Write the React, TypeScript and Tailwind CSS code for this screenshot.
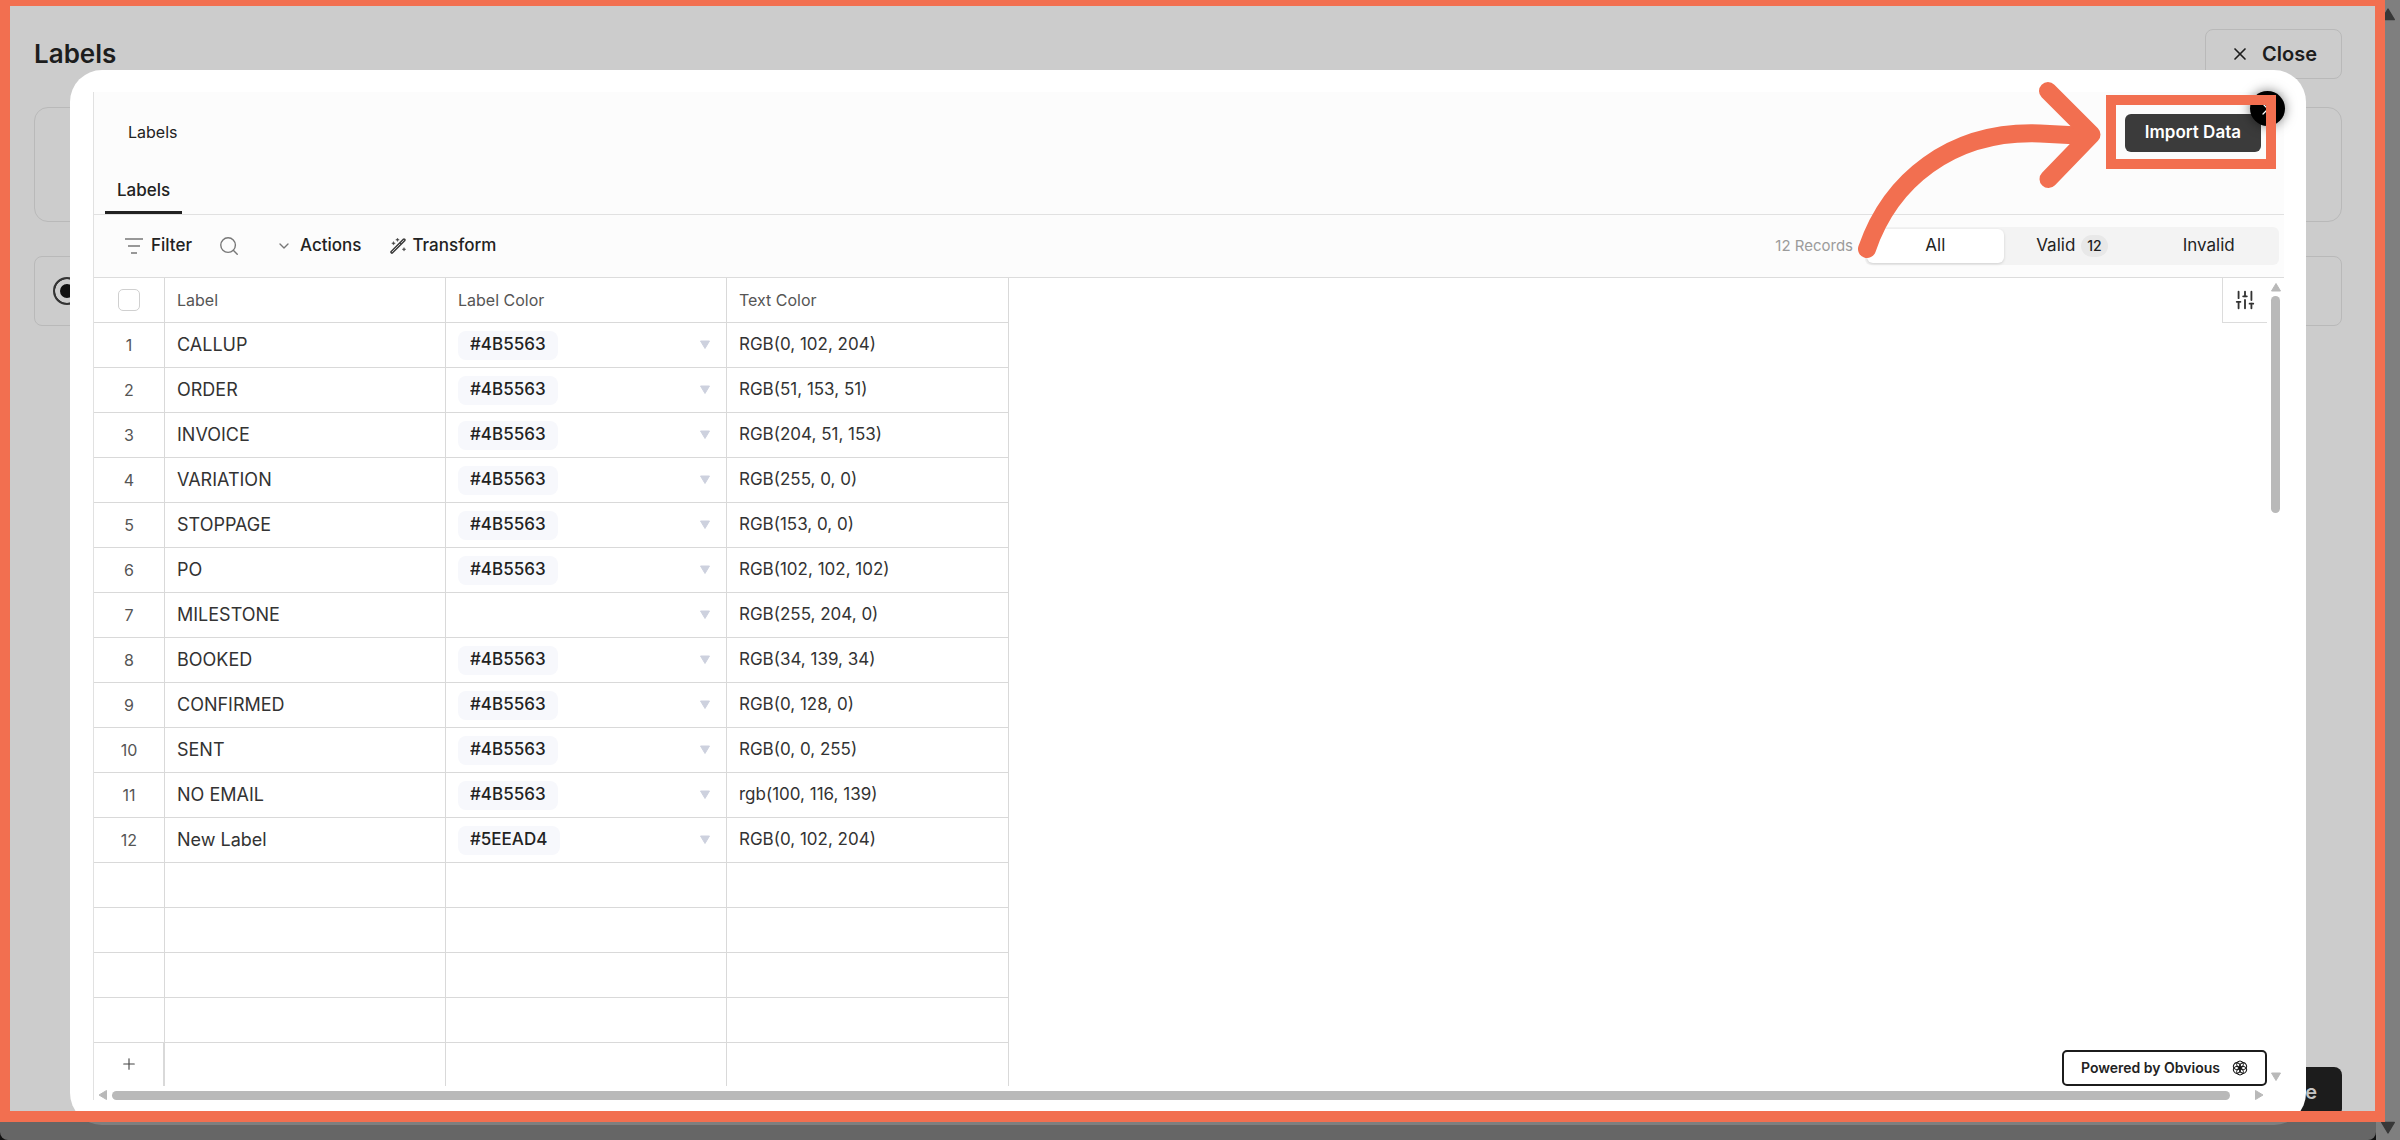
import React from "react";
import { Plus, Search, SlidersVertical, X, ChevronDown } from "lucide-react";

type Row = { label: string; color: string; text: string };

const rows: Row[] = [
  { label: "CALLUP", color: "#4B5563", text: "RGB(0, 102, 204)" },
  { label: "ORDER", color: "#4B5563", text: "RGB(51, 153, 51)" },
  { label: "INVOICE", color: "#4B5563", text: "RGB(204, 51, 153)" },
  { label: "VARIATION", color: "#4B5563", text: "RGB(255, 0, 0)" },
  { label: "STOPPAGE", color: "#4B5563", text: "RGB(153, 0, 0)" },
  { label: "PO", color: "#4B5563", text: "RGB(102, 102, 102)" },
  { label: "MILESTONE", color: "", text: "RGB(255, 204, 0)" },
  { label: "BOOKED", color: "#4B5563", text: "RGB(34, 139, 34)" },
  { label: "CONFIRMED", color: "#4B5563", text: "RGB(0, 128, 0)" },
  { label: "SENT", color: "#4B5563", text: "RGB(0, 0, 255)" },
  { label: "NO EMAIL", color: "#4B5563", text: "rgb(100, 116, 139)" },
  { label: "New Label", color: "#5EEAD4", text: "RGB(0, 102, 204)" },
];

const emptyRows = [13, 14, 15, 16];

const cell = "h-[45px] border-r border-b border-[#d9d9d9] px-3 py-0";

function Triangle({ className, points }: { className: string; points: string }) {
  return (
    <svg viewBox="0 0 10 10" className={className} aria-hidden="true">
      <polygon points={points} fill="currentColor" stroke="currentColor" strokeWidth="1" strokeLinejoin="round" />
    </svg>
  );
}

const UP = "5,1.5 9.5,9 0.5,9";
const DOWN = "0.5,1 9.5,1 5,8.5";
const LEFT = "1,5 8.5,0.5 8.5,9.5";
const RIGHT = "9,5 1.5,0.5 1.5,9.5";

function FilterIcon() {
  return (
    <svg viewBox="0 0 18 16" className="h-4 w-[18px] text-[#777]" fill="none" stroke="currentColor" strokeWidth="1.5" aria-hidden="true">
      <path d="M0 1h18M3 8h12M6 15h6" />
    </svg>
  );
}

function WandIcon() {
  return (
    <svg viewBox="0 0 16 16" className="size-4 text-[#3f3f3f]" fill="none" aria-hidden="true">
      <path d="M1.900 14.100 14 2" stroke="currentColor" strokeWidth="3.400" strokeLinecap="round" />
      <path d="M2.200 13.800 9.800 6.200M11.400 4.600l2.200-2.200" stroke="#c9c9c9" strokeWidth="1" strokeLinecap="round" />
      <path d="m3.500 3.500.5 1.300 1.300.5-1.300.5-.5 1.300L3 5.800l-1.300-.5L3 4.800zM7.500 0l.5 1.300 1.300.5-1.300.5-.5 1.300-.5-1.300-1.300-.5L7 1.300zM14 9.500l.5 1.300 1.300.5-1.300.5-.5 1.300-.5-1.300-1.300-.5 1.300-.5z" fill="currentColor" stroke="currentColor" strokeWidth="0.400" />
    </svg>
  );
}

function RosetteIcon() {
  return (
    <svg viewBox="0 0 16 16" className="size-4" fill="none" stroke="#161616" strokeWidth="1" aria-hidden="true">
      {[0, 60, 120, 180, 240, 300].map((a) => (
        <circle key={a} cx="8" cy="4.400" r="3.400" transform={`rotate(${a} 8 8)`} />
      ))}
      <circle cx="8" cy="8" r="1.200" fill="#161616" />
    </svg>
  );
}

function BackgroundPage() {
  return (
    <div className="flex h-full flex-col px-[34px] pt-[29px] pb-[23px]">
      <div className="flex items-center justify-between">
        <h1 className="text-[26px] leading-8 font-semibold text-[#1d1d1d]">Labels</h1>
        <button type="button" className="flex h-[50px] items-center gap-3 rounded-lg border border-[#b9b9b9] px-6 text-xl font-semibold text-[#1d1d1d]">
          <X className="size-5" strokeWidth={2} />
          Close
        </button>
      </div>
      <div className="mt-7 h-[115px] rounded-[14px] border border-[#b9b9b9]" />
      <div className="mt-[34px] flex h-[70px] items-center rounded-lg border border-[#b9b9b9] pl-[18px]">
        <input
          type="radio"
          defaultChecked
          aria-label="Import from file"
          className="size-7 appearance-none rounded-full border-2 border-[#333] bg-[#111] shadow-[inset_0_0_0_5px_#ccc]"
        />
      </div>
      <button type="button" className="mt-auto ml-auto h-[50px] rounded-lg bg-[#1c1c1c] px-[25px] text-xl font-semibold text-[#c4c4c4]">
        Save
      </button>
    </div>
  );
}

function Header() {
  return (
    <header className="border-b border-[#e1e1e1] bg-[#fcfcfc]">
      <div className="flex h-20 items-center justify-between pr-[23px] pl-[34px]">
        <h2 className="text-base text-[#222]">Labels</h2>
        <button type="button" className="mt-0.5 h-[38px] rounded-md bg-[#3b3b3b] px-5 text-[17px] font-semibold text-white">
          Import Data
        </button>
      </div>
      <nav className="flex px-[11px]">
        <button type="button" className="h-[42px] border-b-3 border-[#222] px-3 pb-0.5 text-[17px] font-medium text-[#222]">
          Labels
        </button>
      </nav>
    </header>
  );
}

function Toolbar() {
  return (
    <div className="flex h-[63px] items-center border-b border-[#dcdcdc] bg-[#fcfcfc] pr-[5px] pl-[31px] text-[17px] text-[#222]">
      <button type="button" className="flex items-center gap-2 font-medium">
        <FilterIcon />
        Filter
      </button>
      <button type="button" aria-label="Search" className="ml-[26px] text-[#777]">
        <Search className="size-[22px]" strokeWidth={1.5} />
      </button>
      <button type="button" className="ml-9 flex items-center gap-2 font-medium">
        <ChevronDown className="size-4 text-[#777]" strokeWidth={2} />
        Actions
      </button>
      <button type="button" className="ml-[29px] flex items-center gap-1.5 font-medium">
        <WandIcon />
        Transform
      </button>
      <span className="mr-3 ml-auto text-[15px] text-[#9b9b9b]">12 Records</span>
      <div className="grid h-[38px] w-[414px] grid-cols-3 rounded-md bg-[#f3f3f3] p-[2px]">
        <button type="button" className="rounded-md bg-white shadow-[0_1px_3px_rgba(0,0,0,0.15)]">
          All
        </button>
        <button type="button" className="flex items-center justify-center gap-1.5">
          Valid
          <span className="rounded-full bg-[#e8e8e8] px-1.5 text-sm leading-[22px] font-medium">12</span>
        </button>
        <button type="button">Invalid</button>
      </div>
    </div>
  );
}

function Grid() {
  return (
    <table className="w-[915px] table-fixed border-separate border-spacing-0 text-left text-[17px] text-[#333]">
      <colgroup>
        <col className="w-[71px]" />
        <col className="w-[281px]" />
        <col className="w-[281px]" />
        <col className="w-[282px]" />
      </colgroup>
      <thead>
        <tr className="text-base text-[#555]">
          <th className={cell}>
            <input
              type="checkbox"
              aria-label="Select all rows"
              className="mx-auto block size-[22px] appearance-none rounded-[5px] border border-[#d0d0d0] bg-white"
            />
          </th>
          <th className={`${cell} font-normal`}>Label</th>
          <th className={`${cell} font-normal`}>Label Color</th>
          <th className={`${cell} font-normal`}>Text Color</th>
        </tr>
      </thead>
      <tbody>
        {rows.map((row, i) => (
          <tr key={i}>
            <td className={`${cell} text-center text-base text-[#555]`}>{i + 1}</td>
            <td className={`${cell} text-lg`}>{row.label}</td>
            <td className={cell}>
              <div className="flex items-center justify-between">
                <select
                  aria-label={`Label color of ${row.label}`}
                  className={`h-[29px] appearance-none rounded-lg px-3 font-medium text-[#222] ${row.color ? "bg-[#f7f8fc]" : "bg-transparent"}`}
                >
                  <option>{row.color}</option>
                </select>
                <Triangle points={DOWN} className="mr-1 size-2.5 text-[#cdd1de]" />
              </div>
            </td>
            <td className={cell}>{row.text}</td>
          </tr>
        ))}
        {emptyRows.map((n) => (
          <tr key={n}>
            <td className={cell} />
            <td className={cell} />
            <td className={cell} />
            <td className={cell} />
          </tr>
        ))}
        <tr>
          <td className="h-[45px] border-r-2 border-[#d9d9d9] p-0">
            <button type="button" aria-label="Add row" className="flex w-full justify-center pb-1 text-[#444]">
              <Plus className="size-[18px]" strokeWidth={1.5} />
            </button>
          </td>
          <td className="border-r border-[#d9d9d9]" />
          <td className="border-r border-[#d9d9d9]" />
          <td className="border-r border-[#d9d9d9]" />
        </tr>
      </tbody>
    </table>
  );
}

function ImportDialog() {
  return (
    <section
      role="dialog"
      aria-label="Import labels"
      className="absolute inset-x-[70px] top-[70px] bottom-[15px] flex flex-col rounded-[32px] bg-white pt-[22px] pr-[22px] pb-[25px] pl-[23px]"
    >
      <div className="flex min-h-0 flex-1 flex-col border-l border-[#e1e1e1]">
        <Header />
        <Toolbar />
        <div className="flex min-h-0 flex-1">
          <div className="relative min-w-0 flex-1 overflow-hidden">
            <Grid />
            <button
              type="button"
              aria-label="Column settings"
              className="absolute top-0 right-0 flex h-[45px] w-[45px] items-center justify-center border-b border-l border-[#dcdcdc] bg-white text-[#333]"
            >
              <SlidersVertical className="size-[22px]" strokeWidth={2} />
            </button>
            <a
              href="#obvious"
              className="absolute right-0 bottom-0 flex h-9 items-center gap-3 rounded-[5px] border-2 border-[#1c1c1c] bg-white px-[17px] text-sm font-semibold text-[#222]"
            >
              Powered by Obvious
              <RosetteIcon />
            </a>
          </div>
          <div className="flex w-[17px] flex-col items-center pt-1 pb-1 text-[#b9b9b9]">
            <Triangle points={UP} className="size-2.5" />
            <div className="mt-1 h-[217px] w-[9px] rounded-full bg-[#b9b9b9]" />
            <Triangle points={DOWN} className="mt-auto size-2.5" />
          </div>
        </div>
        <div className="flex h-[14px] items-center pt-1 pr-5 pl-1 text-[#b9b9b9]">
          <Triangle points={LEFT} className="size-2.5" />
          <div className="mr-6 ml-1 h-[9px] flex-1 rounded-full bg-[#b9b9b9]" />
          <Triangle points={RIGHT} className="size-2.5" />
        </div>
      </div>
      <button
        type="button"
        aria-label="Close dialog"
        className="absolute top-[21px] right-[21px] flex size-[35px] items-center justify-center rounded-full bg-black text-white shadow-[0_0_12px_rgba(0,0,0,0.5)]"
      >
        <X className="size-5" strokeWidth={1.5} />
      </button>
    </section>
  );
}

function Annotations() {
  return (
    <div className="pointer-events-none">
      <div className="absolute top-0 right-[15px] bottom-[18px] left-0 border-t-6 border-r-10 border-b-11 border-l-10 border-[#f26f50] shadow-[0_0_0_60px_rgba(0,0,0,0.5)]" />
      <div className="absolute top-[95px] right-[124px] h-[74px] w-[170px] border-10 border-[#f26f50]" />
      <svg
        viewBox="0 0 280 220"
        className="absolute top-[60px] right-[280px] h-[220px] w-[280px]"
        fill="none"
        stroke="#f26f50"
        strokeWidth="18"
        strokeLinecap="round"
        strokeLinejoin="round"
        aria-hidden="true"
      >
        <path d="M27 189C50 122 110 70 200 73.500L248 76" />
        <path d="M208 31 251.500 74.500 208.500 119" />
      </svg>
    </div>
  );
}

export default function App() {
  return (
    <div className="relative flex h-screen overflow-hidden bg-[#222] font-[Inter,sans-serif]">
      <main className="relative min-w-0 flex-1 rounded-b-lg bg-[#ccc]">
        <BackgroundPage />
        <ImportDialog />
      </main>
      <div className="flex w-6 flex-col items-center justify-between bg-white pt-[7px] pb-[5px] text-[#707070]">
        <Triangle points={UP} className="size-3.5" />
        <Triangle points={DOWN} className="size-3.5" />
      </div>
      <Annotations />
    </div>
  );
}
